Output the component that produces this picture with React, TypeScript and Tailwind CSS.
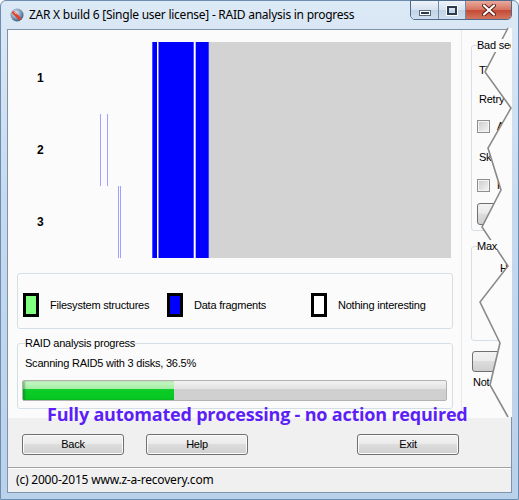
import React from 'react';

function WinButton({ label, className = '' }: { label: string; className?: string }) {
  return (
    <div
      className={`h-[21px] rounded-[3px] border border-[#707070] bg-[linear-gradient(#f2f2f2,#ebebeb_45%,#dddddd_50%,#cfcfcf)] shadow-[inset_0_0_0_1px_#fbfbfb] flex items-center justify-center text-[11px] text-black ${className}`}
    >
      {label}
    </div>
  );
}

function Legend({ fill, label, className = '' }: { fill: string; label: string; className?: string }) {
  return (
    <div className={`flex items-center shrink-0 whitespace-nowrap ${className}`}>
      <div className={`w-[16px] h-[24px] shrink-0 border-[3px] border-black ${fill}`} />
      <span className="ml-[11px]">{label}</span>
    </div>
  );
}

function CheckBox() {
  return <div className="w-[13px] h-[13px] shrink-0 border border-[#8e8f8f] bg-[linear-gradient(135deg,#cbcbcb,#f6f6f6)] shadow-[inset_0_0_0_1px_#f4f4f4]" />;
}

export default function App() {
  const zig = [
    [508, 28],
    [485, 72],
    [511, 108],
    [488, 148],
    [501, 190],
    [482, 227],
    [508, 266],
    [480, 302],
    [500, 343],
    [490, 385],
    [508, 417],
  ];
  const line = zig.map((p) => p.join(',')).join(' ');
  const poly = line + ' 512,417 512,28';

  return (
    <div className="w-[519px] h-[500px] relative overflow-hidden bg-white font-['Liberation_Sans',Arial,sans-serif] text-[11px] tracking-[-0.22px] text-black">
      <div className="w-[519px] h-[500px] flex flex-col rounded-t-[6px] border border-[#6d8db0] bg-[linear-gradient(180deg,#dce9f6_0%,#c6daef_40%,#b9d1ea_100%)]">
        {/* Title bar */}
        <div className="h-[28px] flex items-start shrink-0">
          <div className="mt-[7px] ml-[9px] w-[14px] h-[14px]">
            <svg width="14" height="14" viewBox="0 0 14 14">
              <defs>
                <radialGradient id="ig" cx="40%" cy="35%" r="70%">
                  <stop offset="0%" stopColor="#e8eef5" />
                  <stop offset="60%" stopColor="#7a97b5" />
                  <stop offset="100%" stopColor="#34506e" />
                </radialGradient>
              </defs>
              <circle cx="7" cy="7" r="6.5" fill="url(#ig)" />
              <path d="M3.5 4.5 L9.5 10.5" stroke="#e0402a" strokeWidth="3" strokeLinecap="round" />
              <path d="M4 4 L6 6" stroke="#ffb0a0" strokeWidth="1" strokeLinecap="round" />
            </svg>
          </div>
          <div className="ml-[5px] mt-[6px] text-[12px] leading-[16px] text-black font-['Noto_Sans',sans-serif] tracking-[-0.25px]">
            ZAR X build 6 [Single user license] - RAID analysis in progress
          </div>
          <div className="ml-auto mr-[6px] mt-[-1px] flex h-[20px] rounded-b-[5px] border border-[#4d6a8c] overflow-hidden">
            <div className="w-[28px] h-full bg-[linear-gradient(#eef3f9,#d6e2ef_50%,#c3d4e7_51%,#cfdff0)] flex items-center justify-center border-r border-[#6f8aa8]">
              <div className="w-[10px] h-[4px] mt-[5px] bg-[#2a3a4f] border border-white shadow-[0_0_0_1px_#5a6b80]" />
            </div>
            <div className="w-[27px] h-full bg-[linear-gradient(#eef3f9,#d6e2ef_50%,#c3d4e7_51%,#cfdff0)] flex items-center justify-center border-r border-[#6f8aa8]">
              <div className="w-[10px] h-[9px] border-[2px] border-[#2a3a4f] shadow-[0_0_0_1px_#ffffff]" />
            </div>
            <div className="w-[45px] h-full bg-[linear-gradient(#e9a99c,#d6725f_50%,#c44a34_51%,#d3755e)] flex items-center justify-center">
              <svg width="14" height="12" viewBox="0 0 14 12">
                <path d="M2 1.5 L12 10.5 M12 1.5 L2 10.5" stroke="#5a1d14" strokeWidth="4" strokeLinecap="round" />
                <path d="M2 1.5 L12 10.5 M12 1.5 L2 10.5" stroke="#ffffff" strokeWidth="2.2" strokeLinecap="round" />
              </svg>
            </div>
          </div>
        </div>

        {/* Client area */}
        <div className="ml-[6px] mr-[6px] h-[464px] border border-[#7f93aa] flex flex-col bg-[#f0f0f0] shrink-0">
          {/* Top section */}
          <div className="h-[388px] flex bg-[#fbfbfb] shrink-0">
            {/* left */}
            <div className="w-[453px] flex flex-col shrink-0">
              {/* map */}
              <div className="mt-[12px] flex h-[216px] shrink-0">
                <div className="w-[48px] flex flex-col font-bold text-[12px]">
                  <div className="h-[72px] flex items-center pl-[29px]">1</div>
                  <div className="h-[72px] flex items-center pl-[29px]">2</div>
                  <div className="h-[72px] flex items-center pl-[29px]">3</div>
                </div>
                <svg width="395" height="216" viewBox="0 0 395 216" className="block">
                  <rect x="44" y="72" width="1" height="72" fill="#a0a0ff" />
                  <rect x="51" y="72" width="1" height="72" fill="#a0a0ff" />
                  <rect x="62" y="144" width="1" height="72" fill="#a0a0ff" />
                  <rect x="64" y="144" width="1" height="72" fill="#a0a0ff" />
                  <rect x="96" y="0" width="57" height="216" fill="#0000ff" />
                  <rect x="96" y="0" width="1" height="216" fill="#5050ff" />
                  <rect x="101" y="0" width="1.5" height="216" fill="#ffffff" />
                  <rect x="137.7" y="0" width="2" height="216" fill="#ffffff" />
                  <rect x="152" y="0" width="1" height="216" fill="#4040ff" />
                  <rect x="153" y="0" width="242" height="216" fill="#d3d3d3" />
                </svg>
              </div>
              {/* legend */}
              <div className="ml-[9px] mt-[15px] w-[436px] h-[56px] shrink-0 rounded-[3px] border border-[#d5dfe5] flex items-center pl-[5px] pt-[8px]">
                <Legend fill="bg-[#80ff80]" label="Filesystem structures" className="w-[144px]" />
                <Legend fill="bg-[#0000ff]" label="Data fragments" className="w-[144px]" />
                <Legend fill="bg-white" label="Nothing interesting" />
              </div>
              {/* progress group */}
              <div className="ml-[9px] mt-[8px] w-[436px] relative shrink-0">
                <div className="flex">
                  <span className="ml-[8px] leading-[13px] bg-[#fbfbfb] relative z-10">RAID analysis progress</span>
                </div>
                <div className="mt-[-7px] h-[66px] rounded-[3px] border border-[#d5dfe5] flex flex-col">
                  <div className="mt-[13px] ml-[7px] leading-[13px]">Scanning RAID5 with 3 disks, 36.5%</div>
                  <div className="mt-[10px] ml-[4px] w-[425px] h-[21px] rounded-[2px] border border-[#b2b2b2] bg-[linear-gradient(#f2f2f2,#e2e2e2_40%,#d0d0d0_45%,#cfcfcf)] overflow-hidden">
                    <div className="w-[151px] h-full bg-[linear-gradient(#c9f8c9,#a6eea6_40%,#0ccd28_45%,#06c722)] shadow-[inset_2px_0_2px_rgba(0,90,0,0.35)]" />
                  </div>
                </div>
              </div>
              {/* big label */}
              <div className="relative z-10 mt-[-8px] h-[26px] leading-[26px] shrink-0 pl-[39px] font-['Open_Sans',sans-serif] font-bold text-[18px] text-[#5c1ff8] tracking-[-0.2px] whitespace-nowrap">
                Fully automated processing - no action required
              </div>
            </div>
            {/* separator */}
            <div className="w-px bg-[#e8e8e8] shrink-0" />
            {/* right column (clipped by torn edge) */}
            <div className="flex-1 overflow-hidden flex flex-col whitespace-nowrap">
              <div className="ml-[9px] mt-[9px] w-[120px] relative shrink-0">
                <div className="flex">
                  <span className="ml-[6px] leading-[13px] bg-[#fbfbfb] relative z-10">Bad sectors</span>
                </div>
                <div className="mt-[-7px] h-[186px] rounded-[3px] border border-[#d5dfe5] flex flex-col pl-[7px]">
                  <div className="mt-[18px] leading-[13px]">Timeout</div>
                  <div className="mt-[16px] leading-[13px]">Retry count</div>
                  <div className="mt-[14px] h-[13px] flex items-center gap-[7px] -ml-[2px]"><CheckBox /><span>Auto</span></div>
                  <div className="mt-[18px] leading-[13px]">Skip</div>
                  <div className="mt-[15px] h-[13px] flex items-center gap-[7px] -ml-[2px]"><CheckBox /><span>Fast</span></div>
                  <div className="mt-[11px] -ml-[2px] w-[80px] h-[22px] rounded-[3px] border border-[#707070] bg-[linear-gradient(#f2f2f2,#ebebeb_45%,#dddddd_50%,#cfcfcf)]" />
                </div>
              </div>
              <div className="ml-[9px] mt-[9px] w-[120px] relative shrink-0">
                <div className="flex">
                  <span className="ml-[6px] leading-[13px] bg-[#fbfbfb] relative z-10">Max</span>
                </div>
                <div className="mt-[-7px] h-[95px] rounded-[3px] border border-[#d5dfe5] flex flex-col">
                  <div className="mt-[15px] ml-[28px] leading-[13px]">H</div>
                </div>
              </div>
              <div className="ml-[10px] mt-[10px] w-[80px] h-[21px] shrink-0 rounded-[3px] border border-[#707070] bg-[linear-gradient(#f2f2f2,#ebebeb_45%,#dddddd_50%,#cfcfcf)]" />
              <div className="ml-[11px] mt-[4px] leading-[13px]">Not</div>
            </div>
          </div>
          {/* buttons row */}
          <div className="h-[49px] flex items-start pt-[16px] bg-[#f0f0f0] shrink-0">
            <WinButton label="Back" className="ml-[14px] w-[102px]" />
            <WinButton label="Help" className="ml-[22px] w-[102px]" />
            <WinButton label="Exit" className="ml-[109px] w-[102px]" />
          </div>
          {/* status bar */}
          <div className="flex-1 border-t border-[#a0a0a0] shadow-[inset_0_1px_0_#ffffff] bg-[#f0f0f0] flex items-center pl-[8px] font-['Noto_Sans',sans-serif] text-[12px] tracking-[-0.2px]">
            (c) 2000-2015 www.z-a-recovery.com
          </div>
        </div>
      </div>
      {/* torn-edge overlay */}
      <svg className="absolute left-0 top-0 pointer-events-none" width="519" height="500" viewBox="0 0 519 500">
        <polygon points={poly} fill="#fbfbfb" />
        <polyline points={line} fill="none" stroke="#8a8a8a" strokeWidth="1.6" strokeLinejoin="miter" />
      </svg>
    </div>
  );
}
